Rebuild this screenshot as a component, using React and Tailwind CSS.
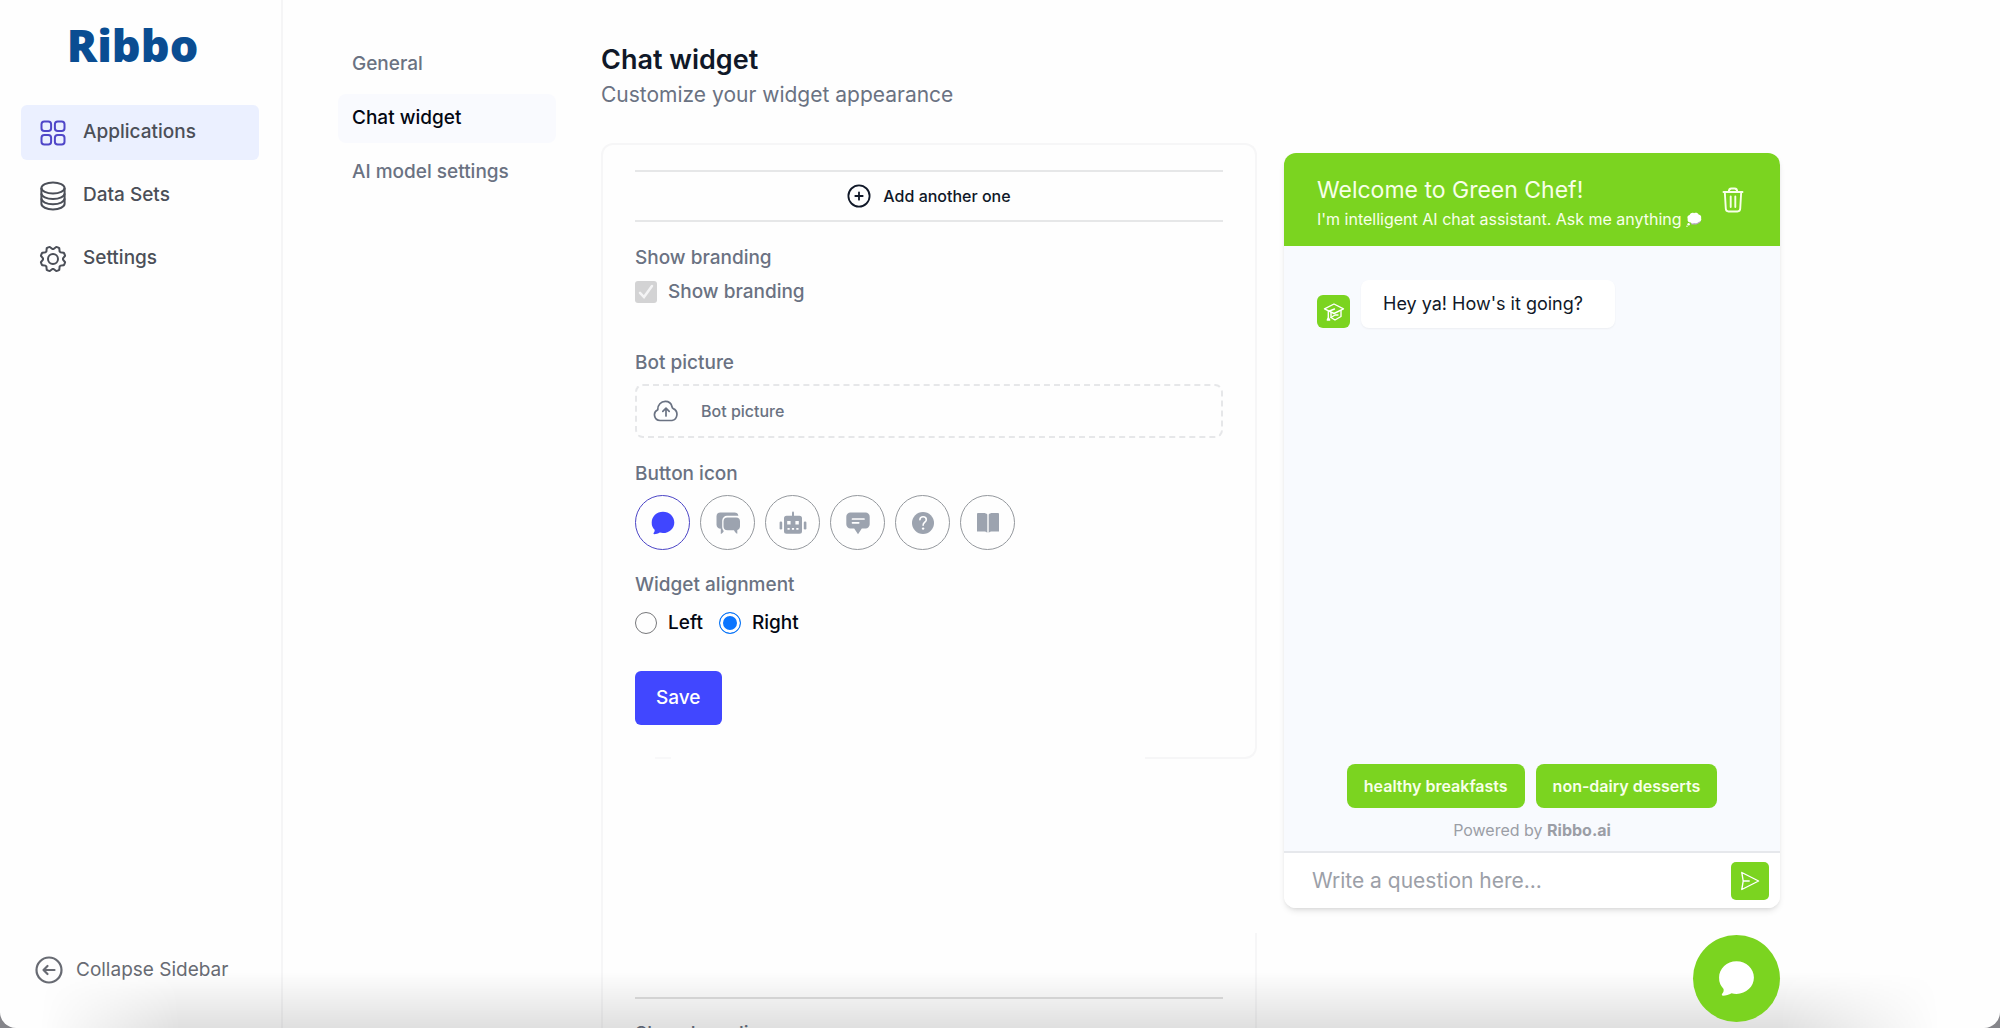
import React, { useState } from 'react';
import { PiGear } from 'react-icons/pi';

const GridIcon = () => (
  <svg viewBox="0 0 26 26" className="size-[26px]" fill="none" stroke="#4f46c8" strokeWidth="2">
    <rect x="1.5" y="1.5" width="9.6" height="9.6" rx="2.8" />
    <rect x="14.9" y="1.5" width="9.6" height="9.6" rx="2.8" />
    <rect x="1.5" y="14.9" width="9.6" height="9.6" rx="2.8" />
    <rect x="14.9" y="14.9" width="9.6" height="9.6" rx="2.8" />
  </svg>
);

const DatabaseIcon = () => (
  <svg viewBox="0 0 28 30" className="h-[30px] w-7" fill="none" stroke="currentColor" strokeWidth="2">
    <ellipse cx="14" cy="7" rx="11.6" ry="5.6" />
    <path d="M2.4 7v15.8c0 3.1 5.2 5.6 11.6 5.6s11.6-2.5 11.6-5.6V7" />
    <path d="M2.4 12.4c0 3.1 5.2 5.6 11.6 5.6s11.6-2.5 11.6-5.6M2.4 17.6c0 3.1 5.2 5.6 11.6 5.6s11.6-2.5 11.6-5.6" />
  </svg>
);

const BackIcon = () => (
  <svg viewBox="0 0 28 28" className="size-7" fill="none" stroke="currentColor" strokeWidth="2.2" strokeLinecap="round" strokeLinejoin="round">
    <circle cx="14" cy="14" r="12.5" />
    <path d="M19.5 14h-11M12.5 10l-4 4 4 4" />
  </svg>
);

const PlusIcon = () => (
  <svg viewBox="0 0 24 24" className="size-6" fill="none" stroke="currentColor" strokeWidth="1.8" strokeLinecap="round">
    <circle cx="12" cy="12" r="10.6" />
    <path d="M12 8.3v7.4M8.3 12h7.4" />
  </svg>
);

const UploadIcon = () => (
  <svg viewBox="0 0 26 22" className="h-[22px] w-[26px]" fill="none" stroke="currentColor" strokeWidth="1.7" strokeLinecap="round" strokeLinejoin="round">
    <path d="M7 20.5a5.6 5.6 0 0 1-2.200-10.700C4.600 4.800 8 1.400 12.300 1.400c3.600 0 6 2.200 6.700 5.300.2.900.5 1.500 1.200 1.900A6.300 6.300 0 0 1 19 20.500z" />
    <path d="M13 16V8.500M9.800 11.300 13 8.200l3.200 3.100" />
  </svg>
);

const TrashIcon = () => (
  <svg viewBox="0 0 22 26" className="h-[26px] w-[22px]" fill="none" stroke="currentColor" strokeWidth="1.9" strokeLinecap="round" strokeLinejoin="round">
    <path d="M1.500 5h19M6.800 5c0-2.200.9-3.500 2.600-3.500h3.200c1.700 0 2.600 1.300 2.600 3.500M2.800 5l1 16.800c.1 1.700 1 2.700 2.700 2.700h9c1.700 0 2.600-1 2.700-2.700l1-16.800M8.700 9.500v10.500M13.300 9.500v10.500" />
  </svg>
);

const ThoughtIcon = () => (
  <svg viewBox="0 0 16 16" className="size-4">
    <path fill="#b9a7c4" d="M5 13.200c2.500.8 8.500.5 9.800-3.200l-9-1z" />
    <path fill="#fff" d="M4.800 11.500C2.600 11.700 1 10 1.700 8c-.9-1.900.2-3.800 1.900-4C4.500 1.900 6.600 1.300 8 2.200c1.700-1 4-.4 4.600 1.200 2 .2 3.100 2 2.500 3.700.8 2-.5 3.800-2.600 4-1.200 1.300-3.100 1.600-4.200.8-1.200.8-2.700.6-3.500-.4z" />
    <circle cx="2.600" cy="13.200" r="1.200" fill="#fff" />
    <circle cx="1" cy="15.200" r=".7" fill="#fff" />
  </svg>
);

const CapIcon = () => (
  <svg viewBox="0 0 22 20" className="h-5 w-[22px]" fill="none" stroke="#fff" strokeWidth="1.4" strokeLinecap="round" strokeLinejoin="round">
    <path d="M1.500 6.800 11 2l9.500 4.800L11 11.500z" />
    <path d="M11.500 7 5.300 9.500v6M5.300 15.500l-1 2.500h2.400zM8 10.500v5l4 2.500 6-3.500V8.500" />
    <path d="m8 15.500 4-2.500h3" />
  </svg>
);

const SendIcon = () => (
  <svg viewBox="0 0 20 20" className="size-5" fill="none" stroke="#fff" strokeWidth="1.4" strokeLinecap="round" strokeLinejoin="round">
    <path d="M1.800 1.500 18.600 10 1.800 18.500 3.200 10zM3.200 10h6" />
  </svg>
);

const BubbleIcon = ({ className }) => (
  <svg viewBox="0 0 24 24" className={className} fill="currentColor">
    <path d="M12 .8c6.300 0 11.300 4.700 11.300 10.600S18.300 22 12 22c-1.100 0-2.200-.1-3.200-.4-1.700 1-3.800 1.600-5.500 1.600-.8 0-1.100-.8-.5-1.400.8-.8 1-2 .8-3A10.200 10.200 0 0 1 .7 11.400C.7 5.500 5.700.8 12 .8z" />
  </svg>
);

const ChatsIcon = () => (
  <svg viewBox="0 0 26 24" className="h-6 w-[26px]" fill="currentColor">
    <path d="M5.500 1.500h14a4 4 0 0 1 3.900 3.300H12a4.800 4.800 0 0 0-4.800 4.800V16c0 1.800.7 3 1.600 3.900-.6 1.300-1.500 2.300-3 3.100v-5.200C3.200 17.600 1.500 16 1.500 13.500v-8a4 4 0 0 1 4-4z" />
    <path d="M12.500 6.500H21a4 4 0 0 1 4 4v4.700c0 1.900-1.100 3.300-2.700 3.800v3.800c-1.600-.8-2.700-2-3.300-3.600h-6.500a4 4 0 0 1-4-4v-4.700a4 4 0 0 1 4-4z" />
  </svg>
);

const RobotIcon = () => (
  <svg viewBox="0 0 28 24" className="h-6 w-7" fill="currentColor">
    <path d="M13 1.500a1 1 0 0 1 2 0V5h-2z" />
    <path fillRule="evenodd" d="M7.500 4.800h13A2.500 2.500 0 0 1 23 7.300v12.900a2.500 2.500 0 0 1-2.500 2.500h-13A2.500 2.500 0 0 1 5 20.200V7.300a2.500 2.500 0 0 1 2.500-2.500zM8.200 10v3.400h3.400V10zm8.200 0v3.400h3.400V10zM8.500 17v1.700h2.200V17zm4.400 0v1.700h2.200V17zm4.400 0v1.700h2.200V17z" />
    <rect x=".6" y="10.500" width="2.600" height="8" rx="1.200" />
    <rect x="24.800" y="10.500" width="2.600" height="8" rx="1.200" />
  </svg>
);

const MessageIcon = () => (
  <svg viewBox="0 0 26 24" className="h-6 w-[26px]">
    <path fill="currentColor" d="M5.500 1.500h15a4.200 4.200 0 0 1 4.200 4.200v7.600a4.200 4.200 0 0 1-4.200 4.200h-3.700L13 23.200l-3.800-5.700H5.500a4.200 4.200 0 0 1-4.200-4.200V5.700a4.200 4.200 0 0 1 4.200-4.200z" />
    <path d="M7.500 8h11.500M7.500 11.800h6.200" stroke="#fff" strokeWidth="1.700" strokeLinecap="round" />
  </svg>
);

const HelpIcon = () => (
  <svg viewBox="0 0 24 24" className="size-6">
    <circle cx="12" cy="12" r="11" fill="currentColor" />
    <path d="M8.900 8.800c.1-1.900 1.400-3 3.200-3s3.200 1.100 3.200 2.900c0 2.500-3.200 2.600-3.200 5.600" fill="none" stroke="#fff" strokeWidth="1.600" strokeLinecap="round" />
    <circle cx="12.100" cy="17.600" r="1.200" fill="#fff" />
  </svg>
);

const BookIcon = () => (
  <svg viewBox="0 0 24 24" className="size-6" fill="currentColor">
    <path d="M1 3.200C1 2.400 1.400 2 2.200 2h5.300c1.800 0 3.100.5 3.800 1.500v18.300C10.500 21 9.300 20.600 7.600 20.600H1z" />
    <path d="M23 3.200c0-.8-.4-1.200-1.200-1.200h-5.300c-1.800 0-3.100.5-3.800 1.500v18.300c.8-.8 2-1.200 3.700-1.200H23z" />
  </svg>
);

const navItems = [
  { label: 'Applications', icon: <GridIcon />, active: true },
  { label: 'Data Sets', icon: <DatabaseIcon /> },
  { label: 'Settings', icon: <PiGear className="size-8" /> },
];

const buttonIcons = [
  { name: 'Bubble', icon: <BubbleIcon className="size-6" /> },
  { name: 'Conversation', icon: <ChatsIcon /> },
  { name: 'Robot', icon: <RobotIcon /> },
  { name: 'Message', icon: <MessageIcon /> },
  { name: 'Help', icon: <HelpIcon /> },
  { name: 'Book', icon: <BookIcon /> },
];

const Sidebar = () => (
  <aside className="flex w-[283px] shrink-0 flex-col border-r-2 border-[#f5f5f6] pb-11">
    <a href="/" className="flex h-[105px] items-center justify-center pr-4 pb-4 font-['Open_Sans',sans-serif] text-[45px] leading-none font-extrabold text-[#0a4d92]">
      Ribbo
    </a>
    <nav className="flex flex-col gap-2 pr-[22px] pl-[21px]">
      {navItems.map((item) => (
        <a
          key={item.label}
          href="#"
          className={`flex h-[55px] items-center gap-[14px] rounded-md pl-4 text-[19px] font-medium text-[#4b4f58] ${item.active ? 'bg-[#ebf0ff]' : ''}`}
        >
          <span className="flex w-8 justify-center">{item.icon}</span>
          {item.label}
        </a>
      ))}
    </nav>
    <button type="button" className="mt-auto flex items-center gap-[13px] pl-[35px] text-[19px] text-[#686b73]">
      <BackIcon />
      Collapse Sidebar
    </button>
  </aside>
);

const SubMenu = () => (
  <nav className="flex w-[218px] shrink-0 flex-col gap-[5px] pt-10 text-[19px] font-medium text-gray-500">
    <a href="#" className="flex h-[49px] items-center rounded-lg pl-[14px]">General</a>
    <a href="#" className="flex h-[49px] items-center rounded-lg bg-[#f9fafe] pl-[14px] text-gray-950">Chat widget</a>
    <a href="#" className="flex h-[49px] items-center rounded-lg pl-[14px]">AI model settings</a>
  </nav>
);

const SettingsForm = () => {
  const [icon, setIcon] = useState('Bubble');
  const [side, setSide] = useState('Right');

  return (
    <div className="flex min-w-0 flex-1 flex-col">
      <form className="rounded-t-xl border-2 border-b-0 border-[#f6f6f7] px-8 pt-[25px] pb-[22px] text-[19px] leading-[26px] font-medium text-gray-500">
        <button type="button" className="flex h-[52px] w-full items-center justify-center gap-3 border-y-2 border-[#e6e7e8] text-base font-medium text-gray-900">
          <PlusIcon />
          Add another one
        </button>

        <p className="mt-[23px]">Show branding</p>
        <label className="mt-2 flex items-center gap-[11px]">
          <span className="grid">
            <input type="checkbox" checked disabled className="col-start-1 row-start-1 size-[22px] appearance-none rounded-[3px] bg-[#d3d3d4]" />
            <svg viewBox="0 0 22 22" className="col-start-1 row-start-1 size-[22px]" fill="none" stroke="#f4f4f5" strokeWidth="2.5" strokeLinecap="round">
              <path d="m5 11.800 4 4.200 8-11" />
            </svg>
          </span>
          Show branding
        </label>

        <p className="mt-[45px]">Bot picture</p>
        <button type="button" className="mt-2 flex h-[54px] w-full items-center gap-[22px] rounded-lg border-2 border-dashed border-[#e6e7e9] px-4 text-base font-medium text-gray-500">
          <UploadIcon />
          Bot picture
        </button>

        <p className="mt-[23px]">Button icon</p>
        <div className="mt-2 flex gap-[10px]">
          {buttonIcons.map((item) => (
            <button
              key={item.name}
              type="button"
              aria-label={item.name}
              onClick={() => setIcon(item.name)}
              className={`flex size-[55px] items-center justify-center rounded-full border ${
                icon === item.name ? 'border-[#4b45c6] text-[#4046ff]' : 'border-[#94989d] text-[#9ca3af]'
              }`}
            >
              {item.icon}
            </button>
          ))}
        </div>

        <p className="mt-[22px]">Widget alignment</p>
        <div className="mt-3 flex gap-4 text-gray-950">
          {['Left', 'Right'].map((value) => (
            <label key={value} className="flex items-center gap-[11px]">
              <input
                type="radio"
                name="alignment"
                checked={side === value}
                onChange={() => setSide(value)}
                className="size-[22px] appearance-none rounded-full border border-[#77787b] checked:border-[#0a75f5] checked:bg-[#0a75ff] checked:shadow-[inset_0_0_0_3px_white]"
              />
              {value}
            </label>
          ))}
        </div>

        <button type="submit" className="mt-[35px] h-[54px] rounded-md bg-[#4147ff] px-[21px] text-[19px] font-medium text-white">
          Save
        </button>
      </form>

      <div className="flex-1 border-l-2 border-[#f6f6f7]">
        <div className="flex h-3 justify-between pl-[52px]">
          <div className="w-4 border-b-2 border-[#f8f8f9]" />
          <div className="w-28 rounded-br-xl border-r-2 border-b-2 border-[#f6f6f7]" />
        </div>
        <div className="mt-[174px] border-r-2 border-[#f6f6f7] px-8 pt-16">
          <hr className="border-t-2 border-[#e0e0e0]" />
          <p className="mt-[22px] text-[19px] leading-[26px] font-medium text-gray-500">Show branding</p>
        </div>
      </div>
    </div>
  );
};

const ChatPreview = () => (
  <div className="flex w-[496px] shrink-0 flex-col pt-[10px]">
    <section className="flex h-[755px] flex-col overflow-hidden rounded-xl shadow-md">
      <header className="flex h-[93px] shrink-0 items-center justify-between bg-[#7bd420] pr-9 pl-[33px] text-[#f8ffe9]">
        <div className="pt-2">
          <h2 className="text-[23px] leading-[30px]">Welcome to Green Chef!</h2>
          <p className="flex items-center gap-1 text-base leading-7">
            I'm intelligent AI chat assistant. Ask me anything
            <ThoughtIcon />
          </p>
        </div>
        <button type="button" aria-label="Clear chat">
          <TrashIcon />
        </button>
      </header>

      <div className="flex flex-1 flex-col bg-[#f8fafe] px-[33px] pt-[34px] pb-[9px]">
        <div className="flex items-end gap-[11px]">
          <span className="flex size-[33px] items-center justify-center rounded-md bg-[#7bd420]">
            <CapIcon />
          </span>
          <p className="rounded-lg bg-white py-[11px] pr-8 pl-[22px] text-lg leading-[26px] text-gray-900 shadow-xs">Hey ya! How's it going?</p>
        </div>
        <div className="mt-auto flex justify-center gap-[11px]">
          <button type="button" className="h-11 rounded-lg bg-[#7bd420] px-[17px] text-base font-semibold text-[#f8ffe9]">healthy breakfasts</button>
          <button type="button" className="h-11 rounded-lg bg-[#7bd420] px-[17px] text-base font-semibold text-[#f8ffe9]">non-dairy desserts</button>
        </div>
        <p className="mt-[10px] text-center text-base text-[#9b9ea6]">
          Powered by <a href="#" className="font-bold">Ribbo.ai</a>
        </p>
      </div>

      <div className="flex h-[57px] shrink-0 items-center border-t-2 border-[#e6e8ec] bg-white pr-[11px] pl-7">
        <input
          type="text"
          aria-label="Question"
          placeholder="Write a question here..."
          className="min-w-0 flex-1 text-[21px] outline-none placeholder:text-[#9ca0a8]"
        />
        <button type="button" aria-label="Send" className="flex size-[38px] items-center justify-center rounded-[5px] bg-[#7bd420]">
          <SendIcon />
        </button>
      </div>
    </section>

    <button type="button" aria-label="Open chat" className="relative z-10 mt-[27px] flex size-[87px] items-center justify-center self-end rounded-full bg-[#7bd420] text-white">
      <BubbleIcon className="size-[37px]" />
    </button>
  </div>
);

const App = () => (
  <div className="h-screen bg-[#85858a] font-['Inter',sans-serif]">
    <div className="relative flex h-full overflow-hidden rounded-b-2xl bg-[#fefefe]">
      <Sidebar />
      <main className="flex min-w-0 flex-1 pr-[220px] pl-[55px]">
        <SubMenu />
        <div className="ml-[45px] flex min-w-0 flex-1 flex-col pt-[42px]">
          <h1 className="text-[27px] leading-9 font-semibold text-gray-900">Chat widget</h1>
          <p className="mt-[3px] text-[21px] leading-7 text-gray-500">Customize your widget appearance</p>
          <div className="mt-[34px] flex flex-1 gap-[27px]">
            <SettingsForm />
            <ChatPreview />
          </div>
        </div>
      </main>
      <div className="pointer-events-none absolute inset-x-0 bottom-0 h-14 bg-linear-to-t from-black/12 to-transparent mask-[linear-gradient(to_right,transparent_40px,black_180px,black_calc(100%-220px),transparent_calc(100%-60px))]" />
    </div>
  </div>
);

export default App;
